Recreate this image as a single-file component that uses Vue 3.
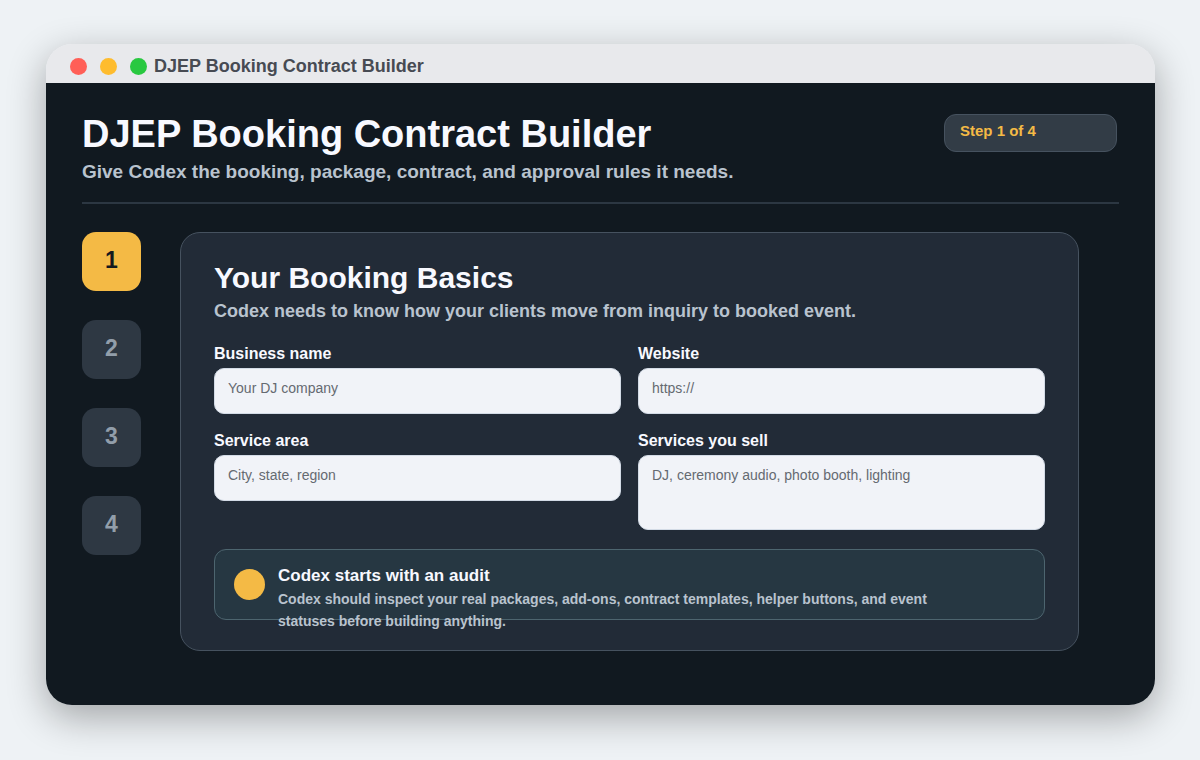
<script setup>
import { ref } from 'vue'

const steps = [1, 2, 3, 4]
const current = ref(1)
const business = ref('')
const website = ref('')
const area = ref('')
const services = ref('')
</script>

<template>
  <div class="window">
    <div class="titlebar">
      <span class="dot red"></span>
      <span class="dot amber"></span>
      <span class="dot green"></span>
      <span class="titlebar-text">DJEP Booking Contract Builder</span>
    </div>

    <div class="content">
      <header class="header">
        <div>
          <h1>DJEP Booking Contract Builder</h1>
          <p class="subtitle">Give Codex the booking, package, contract, and approval rules it needs.</p>
        </div>
        <div class="badge">Step {{ current }} of {{ steps.length }}</div>
      </header>

      <div class="body">
        <nav class="steps" aria-label="Steps">
          <button
            v-for="n in steps"
            :key="n"
            type="button"
            class="step"
            :class="{ active: n === current }"
            @click="current = n"
          >{{ n }}</button>
        </nav>

        <main class="card">
          <h2>Your Booking Basics</h2>
          <p class="lead">Codex needs to know how your clients move from inquiry to booked event.</p>

          <form class="fields" @submit.prevent>
            <div class="field">
              <label for="business">Business name</label>
              <input id="business" v-model="business" type="text" placeholder="Your DJ company" />
            </div>
            <div class="field">
              <label for="website">Website</label>
              <input id="website" v-model="website" type="text" placeholder="https://" />
            </div>
            <div class="field">
              <label for="area">Service area</label>
              <input id="area" v-model="area" type="text" placeholder="City, state, region" />
            </div>
            <div class="field">
              <label for="services">Services you sell</label>
              <textarea id="services" v-model="services" placeholder="DJ, ceremony audio, photo booth, lighting"></textarea>
            </div>
          </form>

          <aside class="callout">
            <span class="callout-dot"></span>
            <div class="callout-text">
              <h3>Codex starts with an audit</h3>
              <p>Codex should inspect your real packages, add-ons, contract templates, helper buttons, and event statuses before building anything.</p>
            </div>
          </aside>
        </main>
      </div>
    </div>
  </div>
</template>

<style>
body {
  background: #eef2f5;
}
#app {
  display: flow-root;
}
</style>

<style scoped>
* {
  box-sizing: border-box;
}
.window {
  margin: 44px 45px 55px 46px;
  border-radius: 26px;
  box-shadow: 0 12px 38px rgba(0, 0, 0, 0.32);
  font-family: "Liberation Sans", Arial, sans-serif;
  font-weight: 700;
}
h1,
h2,
h3,
p {
  margin: 0;
}
.titlebar {
  display: flex;
  align-items: center;
  height: 39px;
  padding: 5px 24px 0;
  border-radius: 26px 26px 0 0;
  background: #e8e9ec;
}
.dot {
  width: 17px;
  height: 17px;
  margin-right: 13px;
  border-radius: 50%;
}
.red {
  background: #ff5f57;
}
.amber {
  background: #febc2e;
}
.green {
  margin-right: 7px;
  background: #28c840;
}
.titlebar-text {
  color: #474b53;
  font-size: 18px;
  line-height: 20px;
}
.content {
  padding: 30px 36px 54px;
  border-radius: 0 0 26px 26px;
  background: #111920;
}
.header {
  display: flex;
  justify-content: space-between;
  align-items: flex-start;
  padding: 0 2px 19px 0;
  border-bottom: 2px solid #2c3742;
}
h1 {
  color: #f8f9ff;
  font-size: 38px;
  line-height: 42px;
}
.subtitle {
  margin-top: 6px;
  color: #b9c3ce;
  font-size: 19px;
  line-height: 22px;
}
.badge {
  width: 173px;
  height: 38px;
  margin-top: 1px;
  padding: 0 15px;
  border: 1px solid #46525f;
  border-radius: 12px;
  background: #323c46;
  color: #f4ba45;
  font-size: 15px;
  line-height: 32px;
}
.body {
  display: flex;
  align-items: flex-start;
  gap: 39px;
  padding: 28px 40px 0 0;
}
.steps {
  display: flex;
  flex-direction: column;
  gap: 29px;
}
.step {
  width: 59px;
  height: 59px;
  padding: 0 0 2px;
  border: 0;
  border-radius: 14px;
  background: #2e3843;
  color: #929eaa;
  font: inherit;
  font-size: 23px;
}
.step.active {
  background: #f4ba45;
  color: #15191d;
}
.card {
  flex: 1;
  min-width: 0;
  padding: 27px 33px 30px;
  border: 1px solid #46525f;
  border-radius: 20px;
  background: #222b37;
}
h2 {
  color: #f8f9ff;
  font-size: 30px;
  line-height: 36px;
}
.lead {
  margin-top: 4px;
  color: #b9c3ce;
  font-size: 18px;
  line-height: 22px;
}
.fields {
  display: grid;
  grid-template-columns: 1fr 1fr;
  align-items: start;
  gap: 17px;
  margin-top: 22px;
}
.field {
  display: flex;
  flex-direction: column;
  gap: 4px;
}
label {
  color: #f8f9ff;
  font-size: 16px;
  line-height: 20px;
}
input,
textarea {
  display: block;
  width: 100%;
  height: 46px;
  margin: 0;
  padding: 0 13px 6px;
  border: 1px solid #d3dbe6;
  border-radius: 10px;
  outline: 0;
  background: #f1f3f8;
  color: #22272e;
  font-family: inherit;
  font-size: 14px;
  font-weight: 400;
  line-height: 18px;
}
textarea {
  height: 75px;
  padding-top: 10px;
  resize: none;
}
input::placeholder,
textarea::placeholder {
  color: #656a71;
  opacity: 1;
}
.callout {
  display: flex;
  align-items: flex-start;
  gap: 13px;
  height: 71px;
  margin-top: 19px;
  padding: 15px 90px 0 19px;
  border: 1px solid #4d656f;
  border-radius: 12px;
  background: #263742;
}
.callout-dot {
  flex: none;
  width: 31px;
  height: 31px;
  margin-top: 4px;
  border-radius: 50%;
  background: #f4ba45;
}
h3 {
  color: #f8f9ff;
  font-size: 17px;
  line-height: 21px;
}
.callout-text p {
  margin-top: 2px;
  color: #b9c3ce;
  font-size: 14px;
  line-height: 22px;
}
</style>
